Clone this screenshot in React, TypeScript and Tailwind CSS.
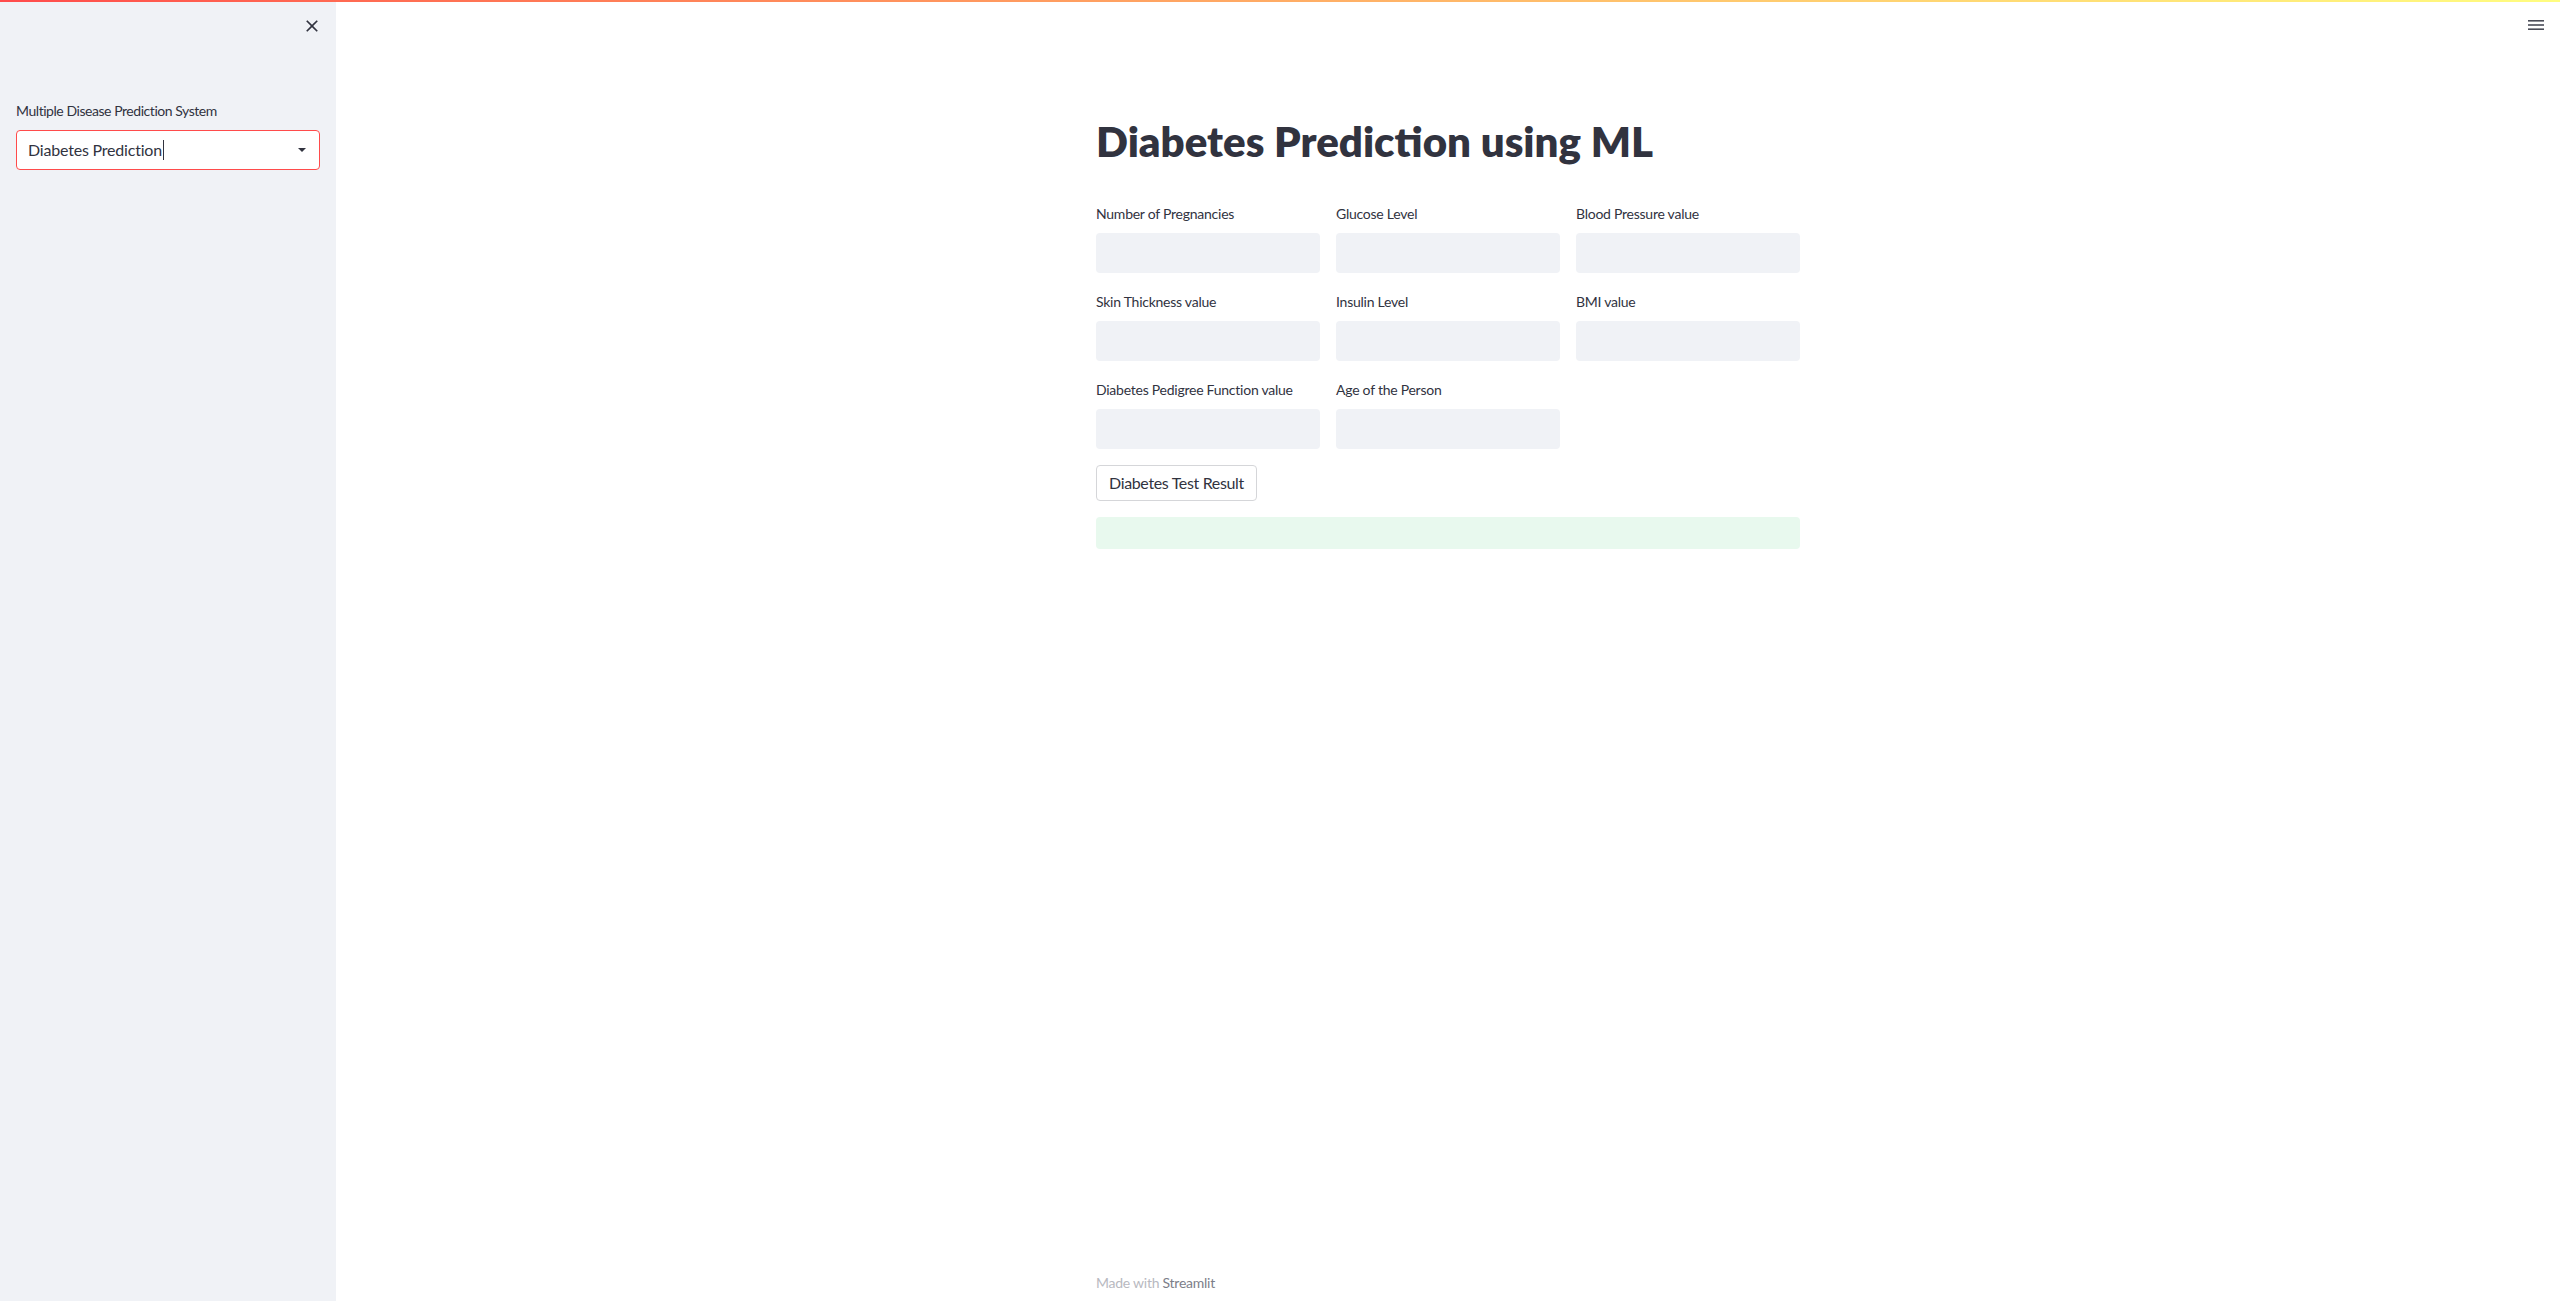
import React from "react";

const font = { fontFamily: "Lato, 'Noto Sans', sans-serif" };

function Field({ label }: { label: string }) {
  return (
    <div className="flex flex-col">
      <div className="h-[24px] flex items-center text-[14px] text-[#31333F] tracking-[-0.25px]">{label}</div>
      <div className="mt-[8px] h-[40px] rounded-[4px] bg-[#f0f2f6]" />
    </div>
  );
}

export default function App() {
  return (
    <div className="relative w-full h-[1301px] flex bg-white overflow-hidden" style={font}>
      <div className="absolute top-0 left-0 right-0 h-[2px] bg-gradient-to-r from-[#ff4b4b] to-[#fffd80] z-10" />
      {/* Sidebar */}
      <div className="w-[336px] h-full bg-[#f0f2f6] flex flex-col px-[16px]">
        <div className="flex justify-end pt-[16px] -mr-[2px]">
          <svg width="20" height="20" viewBox="0 0 24 24" fill="#31333F">
            <path d="M19 6.41L17.59 5 12 10.59 6.41 5 5 6.41 10.59 12 5 17.59 6.41 19 12 13.41 17.59 19 19 17.59 13.41 12z" />
          </svg>
        </div>
        <div className="mt-[62px] h-[24px] flex items-center text-[14px] text-[#31333F] tracking-[-0.45px]">
          Multiple Disease Prediction System
        </div>
        <div className="mt-[8px] h-[40px] rounded-[4px] border border-[#ff4b4b] bg-white flex items-center pl-[11px] pr-[13px]">
          <span className="text-[16px] text-[#31333F] tracking-[-0.2px]">Diabetes Prediction</span>
          <span className="w-[1px] h-[20px] bg-[#31333F] ml-[1px]" />
          <div className="flex-1" />
          <svg width="8" height="4" viewBox="0 0 8 4">
            <path d="M0 0 L8 0 L4 4 Z" fill="#31333F" />
          </svg>
        </div>
      </div>
      {/* Main */}
      <div className="relative flex-1 h-full flex flex-col items-center">
        <div className="absolute top-[19px] right-[16px]">
          <svg width="16" height="12" viewBox="0 0 16 12">
            <rect x="0" y="1" width="16" height="1.6" fill="#4a4c57" />
            <rect x="0" y="5.2" width="16" height="1.6" fill="#4a4c57" />
            <rect x="0" y="9.4" width="16" height="1.6" fill="#4a4c57" />
          </svg>
        </div>
        <div className="w-[704px] flex flex-col pt-[120px]">
          <h1 className="text-[42px] leading-[42px] h-[42px] font-extrabold text-[#31333F]">
            Diabetes Prediction using ML
          </h1>
          <div className="mt-[39px] grid grid-cols-3 gap-x-[16px] gap-y-[16px]">
            <Field label="Number of Pregnancies" />
            <Field label="Glucose Level" />
            <Field label="Blood Pressure value" />
            <Field label="Skin Thickness value" />
            <Field label="Insulin Level" />
            <Field label="BMI value" />
            <Field label="Diabetes Pedigree Function value" />
            <Field label="Age of the Person" />
          </div>
          <div className="mt-[16px]">
            <button className="h-[36px] px-[12px] rounded-[4px] border border-[#d5d6d9] bg-white text-[16px] text-[#31333F] tracking-[-0.35px]">
              Diabetes Test Result
            </button>
          </div>
          <div className="mt-[16px] h-[32px] rounded-[4px] bg-[#e8f9ee]" />
        </div>
        <div className="flex-1" />
        <div className="w-[704px] pb-[8px] text-[14px] tracking-[-0.25px]">
          <span className="text-[#b8b9bf]">Made with </span>
          <span className="text-[#7c7e89]">Streamlit</span>
        </div>
      </div>
    </div>
  );
}
